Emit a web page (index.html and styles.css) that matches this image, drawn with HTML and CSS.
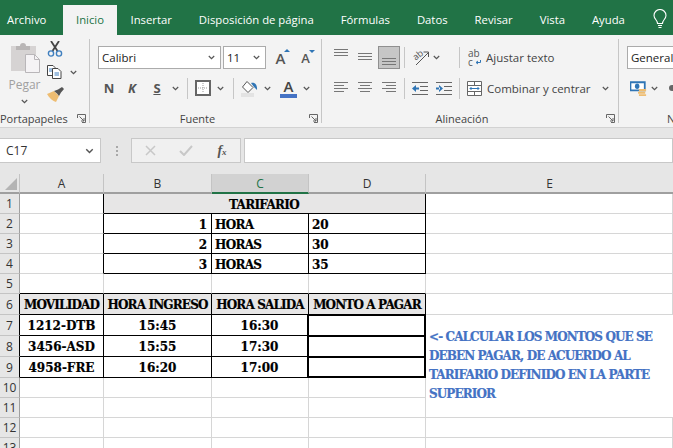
FILE: index.html
```html
<!DOCTYPE html>
<html lang="es">
<head>
    <meta charset="UTF-8">
    <meta name="viewport" content="width=device-width, initial-scale=1.0">
    <title>Tarifario - Excel</title>
    <link rel="stylesheet" href="styles.css">
</head>
<body>
    <svg class="defs" aria-hidden="true">
        <symbol id="chev" viewBox="0 0 7 5"><path d="M.8 1 3.5 3.7 6.2 1" fill="none" stroke="#555" stroke-width="1.2"/></symbol>
        <symbol id="launcher" viewBox="0 0 9 9"><path d="M.5 4V.5H8.500V8.500H5M2.500 2.500 7 7M7 4V7H4" fill="none" stroke="#666"/></symbol>
    </svg>

    <!-- Tabs -->
    <nav class="tabs">
        <span class="tab">Archivo</span>
        <span class="tab active">Inicio</span>
        <span class="tab">Insertar</span>
        <span class="tab">Disposición de página</span>
        <span class="tab">Fórmulas</span>
        <span class="tab">Datos</span>
        <span class="tab">Revisar</span>
        <span class="tab">Vista</span>
        <span class="tab">Ayuda</span>
        <svg class="bulb" width="14" height="20" viewBox="0 0 14 20"><path d="M4.500 14.500C4.500 11 1 10 1 6.500A6 6 0 0 1 13 6.500C13 10 9.500 11 9.500 14.500ZM5 16.500H9M5.500 18.500H8.500" fill="none" stroke="#fff" stroke-width="1.1"/></svg>
    </nav>

    <!-- Ribbon -->
    <section class="ribbon">
        <div class="group g-clip">
            <div class="group-body clip-body">
                <div class="paste">
                    <svg width="30" height="30" viewBox="0 0 30 30">
                        <path d="M1 3H26V28H1Z" fill="#d6d3d3"/>
                        <path d="M6 3H10A3 3 0 0 1 16 3H20V7H6Z" fill="#b9b6b6"/>
                        <path d="M15.500 11.500H24.500L29.500 16.500V29.500H15.500Z" fill="#f5f3f5" stroke="#b9b6b9"/>
                        <path d="M24.500 11.500V16.500H29.500" fill="none" stroke="#b9b6b9"/>
                    </svg>
                    <span class="paste-label">Pegar</span>
                    <svg class="chev" width="7" height="5"><use href="#chev"/></svg>
                </div>
                <div class="clip-tools">
                    <svg width="16" height="16" viewBox="0 0 16 16">
                        <path d="M4 0 10.500 10M12 0 5.500 10" fill="none" stroke="#444" stroke-width="1.800"/>
                        <circle cx="4" cy="12.500" r="2.600" fill="none" stroke="#3f7fbf" stroke-width="1.400"/>
                        <circle cx="12" cy="12.500" r="2.600" fill="none" stroke="#3f7fbf" stroke-width="1.400"/>
                    </svg>
                    <div class="copy-row">
                        <svg width="15" height="14" viewBox="0 0 15 14">
                            <path d="M.5.500H6L8 2.500V10.500H.5Z" fill="#fff" stroke="#444"/>
                            <path d="M5.500 3.500H11L14 6.500V13.500H5.500Z" fill="#fff" stroke="#444"/>
                            <path d="M2 4H5M2 6H5M7.500 8H12M7.500 10H12" stroke="#3f7fbf"/>
                        </svg>
                        <svg class="chev" width="7" height="5"><use href="#chev"/></svg>
                    </div>
                    <svg width="17" height="15" viewBox="0 0 17 15">
                        <path d="M0 7 7 4 12 9 9 15C6 14 2 11 0 7Z" fill="#eebd72"/>
                        <path d="M7 4 10 6.500 12 9 14 5.500 17 2 15 0 11 2.500Z" fill="#555"/>
                    </svg>
                </div>
            </div>
            <div class="group-label"><span class="label-text">Portapapeles</span><svg width="9" height="9"><use href="#launcher"/></svg></div>
        </div>
        <div class="rib-sep"></div>

        <div class="group g-font">
            <div class="group-body col-body">
                <div class="tool-row">
                    <div class="combo combo-font">Calibri<svg class="chev" width="7" height="5"><use href="#chev"/></svg></div>
                    <div class="combo combo-size">11<svg class="chev" width="7" height="5"><use href="#chev"/></svg></div>
                    <span class="size-btn size-up">A<i class="tri tri-up"></i></span>
                    <span class="size-btn size-down">A<i class="tri tri-down"></i></span>
                </div>
                <div class="tool-row row-two">
                    <b class="fmt w-n">N</b>
                    <b class="fmt fmt-k w-k">K</b>
                    <b class="fmt fmt-s w-s">S</b>
                    <span class="w-chev w-chev-s"><svg class="chev" width="7" height="5"><use href="#chev"/></svg></span>
                    <i class="mini-sep"></i>
                    <svg width="16" height="16" viewBox="0 0 16 16">
                        <path d="M1 1H15V15H1Z" fill="#fff" stroke="#666" stroke-width="2"/>
                        <path d="M8 3V13M3 8H13" stroke="#999" stroke-dasharray="1 1"/>
                    </svg>
                    <span class="w-chev"><svg class="chev" width="7" height="5"><use href="#chev"/></svg></span>
                    <i class="mini-sep sep-fill"></i>
                    <svg width="17" height="17" viewBox="0 0 17 17">
                        <path d="M0 13H13V17H0Z" fill="#e3e3e3"/>
                        <path d="M6 1.500 12 7.500 7 12.500 1.500 7Z" fill="#fff" stroke="#555"/>
                        <path d="M10 3C14 2 16.500 5 16 10L13 7Z" fill="#2f75b5"/>
                    </svg>
                    <span class="w-chev"><svg class="chev" width="7" height="5"><use href="#chev"/></svg></span>
                    <span class="color-a">A</span>
                    <span class="w-chev"><svg class="chev" width="7" height="5"><use href="#chev"/></svg></span>
                </div>
            </div>
            <div class="group-label"><span class="label-text">Fuente</span><svg width="9" height="9"><use href="#launcher"/></svg></div>
        </div>
        <div class="rib-sep"></div>

        <div class="group g-align">
            <div class="group-body align-body">
                <div class="align-grid">
                    <div class="tool-row align-row">
                        <svg class="lines" width="14" height="23"><path d="M0 3.500H14M0 6.500H14M0 9.500H14"/></svg>
                        <svg class="lines gap-10" width="14" height="23"><path d="M0 7.500H14M0 10.500H14M0 13.500H14"/></svg>
                        <span class="pressed"><svg class="lines" width="14" height="21"><path d="M0 11.500H14M0 14.500H14M0 17.500H14"/></svg></span>
                        <i class="mini-sep sep-a"></i>
                        <svg class="orient" width="17" height="17" viewBox="0 0 17 17">
                            <path d="M4 16 16 4M11.500 3H16.500V8" fill="none" stroke="#555"/>
                            <text x="1" y="10" class="orient-text" transform="rotate(-40 5 7)">ab</text>
                        </svg>
                        <span class="w-chev w-chev-o"><svg class="chev" width="7" height="5"><use href="#chev"/></svg></span>
                        <i class="mini-sep sep-wrap"></i>
                    </div>
                    <div class="tool-row row-low">
                        <svg class="lines" width="14" height="14"><path d="M0 1.500H14M0 4.500H10M0 7.500H14M0 10.500H10"/></svg>
                        <svg class="lines gap-10" width="14" height="14"><path d="M0 1.500H14M2 4.500H12M0 7.500H14M2 10.500H12"/></svg>
                        <svg class="lines gap-10" width="14" height="14"><path d="M0 1.500H14M4 4.500H14M0 7.500H14M4 10.500H14"/></svg>
                        <i class="mini-sep sep-b"></i>
                        <svg width="16" height="13" viewBox="0 0 16 13"><path d="M0 .5H16M8 4.500H16M8 8.500H16M0 12.500H16" stroke="#666"/><path d="M0 6.500 4 3V10ZM3 5.500H7V7.500H3Z" fill="#2f75b5"/></svg>
                        <svg class="indent-in" width="16" height="13" viewBox="0 0 16 13"><path d="M0 .5H16M8 4.500H16M8 8.500H16M0 12.500H16" stroke="#666"/><path d="M7 6.500 3 3V10ZM0 5.500H4V7.500H0Z" fill="#2f75b5"/></svg>
                        <i class="mini-sep sep-wrap-low"></i>
                    </div>
                </div>
                <div class="wrap-col">
                    <div class="wrap-row">
                        <span class="ab-ico"><span>ab</span><span class="ab-bot">c<svg width="6" height="5" viewBox="0 0 6 5"><path d="M5.500 0V2.500H1.500M3 1 1 2.500 3 4" fill="none" stroke="#2f75b5"/></svg></span></span>
                        <span class="wrap-text">Ajustar texto</span>
                    </div>
                    <div class="wrap-row merge-row">
                        <svg width="15" height="15" viewBox="0 0 15 15"><path d="M.5.5H14.500V14.500H.5ZM.5 4.500H14.500M.5 10.500H14.500M7.500.5V4.500M7.500 10.500V14.500" fill="#fff" stroke="#666"/><path d="M3 7.500H12M4.500 6 3 7.500 4.500 9M10.500 6 12 7.500 10.500 9" fill="none" stroke="#2f75b5"/></svg>
                        <span class="wrap-text merge-text">Combinar y centrar</span>
                        <svg class="chev" width="7" height="5"><use href="#chev"/></svg>
                    </div>
                </div>
            </div>
            <div class="group-label"><span class="label-text">Alineación</span><svg width="9" height="9"><use href="#launcher"/></svg></div>
        </div>
        <div class="rib-sep"></div>

        <div class="group g-num">
            <div class="group-body col-body">
                <div class="combo combo-num">General</div>
                <div class="tool-row num-row">
                    <svg width="19" height="17" viewBox="0 0 19 17">
                        <path d="M.5 1.500H16.500V10.500H.5Z" fill="#fff" stroke="#2f75b5" stroke-width="2"/>
                        <ellipse cx="8" cy="6" rx="2.500" ry="3" fill="#2f75b5"/>
                        <path d="M10 9H18V11.500H10ZM9 12H17V14.500H9ZM10 15H18V17H10Z" fill="#eebd72"/>
                    </svg>
                    <span class="w-chev w-chev-n"><svg class="chev" width="7" height="5"><use href="#chev"/></svg></span>
                    <i class="next-ico"></i>
                </div>
            </div>
            <div class="group-label"><span class="label-text">Número</span></div>
        </div>
    </section>

    <!-- Formula bar -->
    <section class="formula-bar">
        <div class="name-box">C17<svg class="chev" width="9" height="6"><use href="#chev"/></svg></div>
        <i class="grip"></i>
        <div class="fx-buttons">
            <span class="fx-slot"><svg width="11" height="11" viewBox="0 0 11 11"><path d="M1 1 10 10M10 1 1 10" stroke="#c8c8c8" stroke-width="1.500"/></svg></span>
            <span class="fx-slot"><svg width="14" height="11" viewBox="0 0 14 11"><path d="M1 6 5 10 13 1" fill="none" stroke="#c8c8c8" stroke-width="2"/></svg></span>
            <span class="fx-slot fx"><span>f<span class="fx-sub">x</span></span></span>
        </div>
        <div class="formula-input"></div>
    </section>

    <!-- Sheet -->
    <main class="sheet">
        <div class="hd corner"><i></i></div>
        <div class="hd">A</div>
        <div class="hd">B</div>
        <div class="hd hd-sel">C</div>
        <div class="hd">D</div>
        <div class="hd hd-last">E</div>

        <div class="rh">1</div>
        <div class="c br-k"></div>
        <div class="c title">TARIFARIO</div>
        <div class="c"></div>

        <div class="rh">2</div>
        <div class="c br-k"></div>
        <div class="c k num">1</div>
        <div class="c k">HORA</div>
        <div class="c k fig">20</div>
        <div class="c"></div>

        <div class="rh">3</div>
        <div class="c br-k"></div>
        <div class="c k num">2</div>
        <div class="c k">HORAS</div>
        <div class="c k fig">30</div>
        <div class="c"></div>

        <div class="rh">4</div>
        <div class="c br-k"></div>
        <div class="c k num">3</div>
        <div class="c k">HORAS</div>
        <div class="c k fig">35</div>
        <div class="c"></div>

        <div class="rh">5</div>
        <div class="c bb-k"></div>
        <div class="c bb-k"></div>
        <div class="c bb-k"></div>
        <div class="c bb-k"></div>
        <div class="c"></div>

        <div class="rh rh-k">6</div>
        <div class="c k head">MOVILIDAD</div>
        <div class="c k head">HORA INGRESO</div>
        <div class="c k head">HORA SALIDA</div>
        <div class="c k head">MONTO A PAGAR</div>
        <div class="c"></div>

        <div class="rh rh-k">7</div>
        <div class="c k mid">1212-DTB</div>
        <div class="c k mid">15:45</div>
        <div class="c k mid br-2">16:30</div>
        <div class="c thick"></div>
        <div class="c note">&lt;- CALCULAR LOS MONTOS QUE SE DEBEN PAGAR, DE ACUERDO AL TARIFARIO DEFINIDO EN LA PARTE SUPERIOR</div>

        <div class="rh rh-k">8</div>
        <div class="c k mid">3456-ASD</div>
        <div class="c k mid">15:55</div>
        <div class="c k mid br-2">17:30</div>
        <div class="c thick"></div>

        <div class="rh rh-k">9</div>
        <div class="c k mid">4958-FRE</div>
        <div class="c k mid">16:20</div>
        <div class="c k mid br-2">17:00</div>
        <div class="c thick thick-end"></div>

        <div class="rh">10</div>
        <div class="c"></div><div class="c"></div><div class="c"></div><div class="c"></div>

        <div class="rh">11</div>
        <div class="c"></div><div class="c"></div><div class="c"></div><div class="c"></div>

        <div class="rh">12</div>
        <div class="c"></div><div class="c"></div><div class="c"></div><div class="c"></div><div class="c"></div>

        <div class="rh">13</div>
        <div class="c"></div><div class="c"></div><div class="c"></div><div class="c"></div><div class="c"></div>
    </main>
</body>
</html>
```

FILE: styles.css
```css
* {
    box-sizing: border-box;
}

html, body {
    height: 448px;
}

body {
    margin: 0;
    overflow: hidden;
    background: #fff;
    font-family: "Open Sans", "Noto Sans", sans-serif;
    font-size: 11.5px;
    color: #444;
}

.defs {
    display: none;
}

i {
    display: block;
    font-style: normal;
}

/* Tabs */
.tabs {
    display: flex;
    align-items: flex-end;
    height: 35px;
    background: #217346;
    white-space: nowrap;
}

.tab {
    flex: none;
    height: 30px;
    padding: 0 13.5px;
    line-height: 30px;
    color: #fff;
    font-size: 11.3px;
}

.tab:first-child {
    width: 63px;
    padding: 0 0 0 7px;
}

.tab.active {
    width: 54px;
    padding: 0;
    text-align: center;
    background: #f3f3f3;
    color: #217346;
}

.bulb {
    flex: none;
    margin: 0 0 6px 15px;
}

/* Ribbon */
.ribbon {
    display: flex;
    height: 93px;
    background: #f3f3f3;
    border-bottom: 1px solid #d2d2d2;
    overflow: hidden;
}

.group {
    display: flex;
    flex-direction: column;
    flex: none;
}

.g-clip { width: 89px; }
.g-font { width: 231px; }
.g-align { width: 296px; }
.g-num { width: 55px; }

.rib-sep {
    flex: none;
    width: 1px;
    margin: 4px 0;
    background: #c6c6c6;
}

.group-body {
    height: 75px;
}

.group-label {
    position: relative;
    display: flex;
    align-items: center;
    justify-content: center;
    height: 16px;
    padding-right: 16px;
    font-size: 11px;
}

.group-label svg {
    position: absolute;
    right: 3px;
    top: 4px;
}

.g-clip .group-label {
    justify-content: flex-start;
    padding-right: 0;
}

.g-num .group-label {
    justify-content: flex-start;
    padding: 0 0 0 48px;
    overflow: hidden;
}

/* Portapapeles */
.clip-body {
    display: flex;
    padding: 8px 0 0 8px;
}

.paste {
    display: flex;
    flex-direction: column;
    align-items: center;
    width: 33px;
}

.paste-label {
    margin-top: 3px;
    color: #a0a0a0;
    font-size: 12px;
}

.paste .chev {
    margin-top: 6px;
}

.clip-tools {
    display: flex;
    flex-direction: column;
    gap: 8px;
    padding-left: 6px;
    margin-top: -2px;
}

.copy-row {
    display: flex;
    align-items: center;
    gap: 8px;
}

/* Fuente */
.col-body {
    display: flex;
    flex-direction: column;
    padding: 11px 0 0 8px;
}

.tool-row {
    display: flex;
    align-items: center;
}

.combo {
    display: flex;
    align-items: center;
    justify-content: space-between;
    height: 23px;
    padding: 0 5px 0 3px;
    background: #fff;
    border: 1px solid #ababab;
    color: #222;
    font-size: 11.5px;
}

.combo-font { width: 123px; }

.combo-size {
    width: 43px;
    margin-left: 2px;
}

.size-btn {
    position: relative;
    width: 15px;
    color: #555;
    font-weight: 600;
    text-align: center;
}

.size-up { margin-left: 7px; font-size: 15px; }
.size-down { margin-left: 10px; font-size: 13px; }

.tri {
    position: absolute;
    right: -2px;
    top: 1px;
    border-left: 3px solid transparent;
    border-right: 3px solid transparent;
}

.tri-up { border-bottom: 3px solid #2f75b5; }
.tri-down { border-top: 3px solid #2f75b5; }

.row-two {
    height: 20px;
    margin-top: 9px;
}

.fmt {
    font-size: 13px;
    color: #555;
    text-align: center;
}

.w-n { width: 22px; }
.w-k { width: 24px; }
.w-s { width: 26px; }
.fmt-k { font-style: italic; }
.fmt-s { text-decoration: underline; }

.w-chev {
    display: flex;
    flex: none;
    justify-content: center;
    width: 18px;
}

.w-chev-s {
    width: 10px;
    margin-right: 7px;
}

.mini-sep {
    flex: none;
    width: 1px;
    height: 21px;
    margin: 0 7px 0 0;
    background: #c6c6c6;
}

.sep-fill { margin-left: 4px; }

.color-a {
    width: 17px;
    margin-left: 4px;
    border-bottom: 4px solid #4472c4;
    color: #444;
    font-size: 15px;
    font-weight: 600;
    line-height: 16px;
    text-align: center;
}

/* Alineacion */
.align-body {
    display: flex;
    padding: 11px 0 0 12px;
}

.align-grid {
    flex: none;
    width: 126px;
}

.align-row {
    height: 23px;
}

.row-low {
    height: 20px;
    margin-top: 9px;
}

.lines {
    flex: none;
    stroke: #777;
}

.gap-10 {
    margin-left: 10px;
}

.pressed {
    display: flex;
    justify-content: center;
    flex: none;
    width: 22px;
    height: 23px;
    margin-left: 6px;
    background: #c6c6c6;
    border: 1px solid #8f8f8f;
}

.sep-a { margin-left: 4px; }
.sep-b { margin-left: 8px; }

.orient {
    flex: none;
    overflow: visible;
}

.orient-text {
    font-size: 9px;
    fill: #555;
}

.w-chev-o { width: 14px; }
.sep-wrap { margin: 0 0 0 16px; }
.indent-in { margin-left: 8px; }
.sep-wrap-low { margin: 0 0 0 7px; }

.wrap-col {
    display: flex;
    flex-direction: column;
    gap: 8px;
    padding-left: 8px;
}

.wrap-row {
    display: flex;
    align-items: center;
    height: 23px;
}

.merge-row {
    margin-left: -1px;
}

.ab-ico {
    display: flex;
    flex-direction: column;
    flex: none;
    width: 14px;
    font-size: 10px;
    line-height: 9px;
    color: #555;
}

.ab-bot {
    display: flex;
    align-items: center;
    gap: 2px;
}

.wrap-text {
    margin-left: 4px;
    color: #444;
    white-space: nowrap;
}

.merge-text {
    margin-left: 5px;
    margin-right: 11px;
}

/* Numero */
.combo-num {
    flex: none;
    width: 60px;
}

.num-row {
    height: 20px;
    margin: 9px 0 0 3px;
}

.w-chev-n {
    margin-left: -2px;
}

.next-ico {
    flex: none;
    width: 5px;
    height: 6px;
    margin-left: 6px;
    border-radius: 3px 0 0 3px;
    background: #666;
}

/* Formula bar */
.formula-bar {
    display: flex;
    align-items: flex-start;
    height: 46px;
    padding-top: 10px;
    background: #e6e6e6;
}

.name-box {
    display: flex;
    align-items: center;
    justify-content: space-between;
    width: 101px;
    height: 25px;
    padding: 0 6px;
    background: #fff;
    border: 1px solid #c8c8c8;
    border-left: none;
    color: #333;
    font-size: 12px;
}

.grip {
    width: 2px;
    height: 10px;
    margin: 8px 13px 0 15px;
    background: linear-gradient(#a8a8a8 2px, transparent 2px) 0 0 / 100% 4px;
}

.fx-buttons {
    display: flex;
    align-items: center;
    width: 110px;
    height: 25px;
    background: #f0f0f0;
    border: 1px solid #c8c8c8;
}

.fx-slot {
    display: flex;
    justify-content: center;
    width: 36px;
}

.fx {
    font-family: "Liberation Serif", serif;
    font-size: 14px;
    font-style: italic;
    font-weight: bold;
    color: #555;
}

.fx-sub {
    font-size: 9px;
}

.formula-input {
    flex: 1;
    height: 25px;
    margin-left: 3px;
    background: #fff;
    border: 1px solid #c8c8c8;
}

/* Sheet */
.sheet {
    display: grid;
    grid-template-columns: 20px 84px 108px 97px 117px 247px;
    grid-template-rows: 20px repeat(5, 20px) repeat(4, 21px) repeat(4, 20px);
    font-family: "DejaVu Serif", serif;
    font-weight: bold;
    font-size: 12px;
    letter-spacing: -0.7px;
    color: #000;
}

.hd, .rh {
    display: flex;
    align-items: center;
    justify-content: center;
    background: #e6e6e6;
    font-family: "Open Sans", sans-serif;
    font-size: 12px;
    font-weight: normal;
    letter-spacing: 0;
    color: #333;
}

.hd {
    border-right: 1px solid #c4c4c4;
    border-bottom: 2px solid #9f9f9f;
}

.hd-last {
    border-right: none;
}

.hd-sel {
    background: #d2d2d2;
    border-bottom-color: #217346;
    color: #217346;
}

.corner {
    position: relative;
}

.corner i {
    position: absolute;
    right: 2px;
    bottom: 2px;
    border-left: 12px solid transparent;
    border-bottom: 12px solid #b4b4b4;
}

.rh {
    border-right: 1px solid #9f9f9f;
    border-bottom: 1px solid #c4c4c4;
}

.rh-k {
    border-right-color: #000;
}

.c {
    display: flex;
    align-items: center;
    min-width: 0;
    padding: 2px 4px 0 3px;
    white-space: nowrap;
    border-right: 1px solid #d6d6d6;
    border-bottom: 1px solid #d6d6d6;
    -webkit-text-stroke: 0.2px #000;
}

.k {
    border-right-color: #000;
    border-bottom-color: #000;
}

.br-k {
    border-right-color: #000;
}

.bb-k {
    border-bottom-color: #000;
}

.title {
    grid-column: span 3;
    justify-content: center;
    background: #e7e6e6;
    border-right-color: #000;
    border-bottom-color: #000;
}

.num, .fig, .mid {
    letter-spacing: 0;
}

.num {
    justify-content: flex-end;
}

.head, .mid {
    justify-content: center;
    padding: 2px 0 0;
}

.head {
    background: #e7e6e6;
    letter-spacing: -0.85px;
}

.br-2 {
    border-right: 2px solid #000;
}

.thick {
    border-top: 1px solid #000;
    border-right: 2px solid #000;
    border-bottom: 1px solid #000;
}

.thick-end {
    border-bottom-width: 2px;
}

.note {
    grid-column: 6;
    grid-row: 8 / span 5;
    white-space: normal;
    padding: 0 3px;
    line-height: 19px;
    letter-spacing: -0.9px;
    color: #4472c4;
    border-right: none;
    -webkit-text-stroke: 0.2px #4472c4;
}
```
